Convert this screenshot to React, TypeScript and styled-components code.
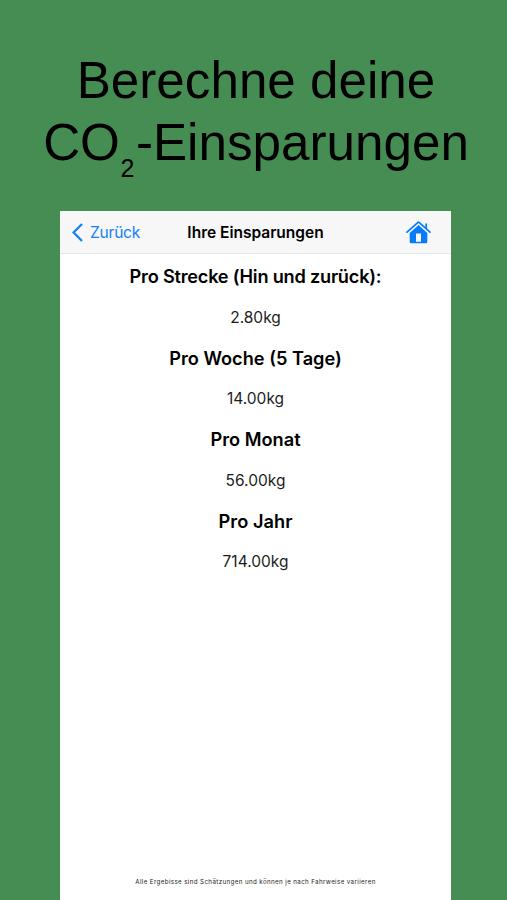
import React from 'react';
import styled, { createGlobalStyle } from 'styled-components';

const GlobalStyle = createGlobalStyle`
  *{box-sizing:border-box}
  body{margin:0;background:#468d53;overflow:hidden}
`;
const Page = styled.main`
  width:507px;height:900px;display:flex;flex-direction:column;background:#468d53;color:#000;overflow:hidden;
`;
const Headline = styled.h1`
  margin:0;height:211px;padding:50px 0 0 5px;font:400 51.2px/62px "Liberation Sans",Arial,sans-serif;text-align:center;white-space:nowrap;
`;
const HeadlineRow = styled.span`
  display:block;
`;
const Subscript = styled.sub`
  display:inline-block;width:16px;text-indent:-1px;text-align:center;font-size:25px;line-height:0;vertical-align:-17px;
`;
const Screen = styled.section`
  width:391px;margin-left:60px;flex:1;display:flex;flex-direction:column;background:#fff;font-family:Inter,sans-serif;
`;
const NavBar = styled.header`
  height:43px;flex:none;display:grid;grid-template-columns:110px 1fr 110px;align-items:center;background:#f7f7f7;border-bottom:1px solid #e6e6e6;
`;
const BackButton = styled.button`
  display:flex;align-items:center;gap:7px;padding:1px 0 0 12px;border:0;background:none;color:#1580f8;font:400 15.6px/20px Inter,sans-serif;letter-spacing:-.25px;
`;
const HomeButton = styled.button`
  justify-self:end;display:flex;margin-right:20px;padding:0;border:0;background:none;color:#087bfa;
`;
const NavTitle = styled.h2`
  margin:0;font-size:15.5px;font-weight:600;text-align:center;white-space:nowrap;
`;
const Results = styled.dl`
  margin:0;padding-top:11.4px;text-align:center;
`;
const Period = styled.dt<{ $tracking: number }>`
  font-size:18.2px;font-weight:630;line-height:22px;height:41.6px;white-space:nowrap;letter-spacing:${p => p.$tracking}px;
`;
const Amount = styled.dd`
  margin:0;color:#1c1c1c;font-size:15.5px;line-height:22px;height:39.9px;
`;
const Footnote = styled.p`
  margin:auto 0 13px;color:#222;font-size:6.2px;line-height:10px;letter-spacing:.385px;text-align:center;white-space:nowrap;
`;

const savings = [
  { period: 'Pro Strecke (Hin und zurück):', amount: '2.80kg', tracking: -0.23 },
  { period: 'Pro Woche (5 Tage)', amount: '14.00kg', tracking: 0 },
  { period: 'Pro Monat', amount: '56.00kg', tracking: 0.02 },
  { period: 'Pro Jahr', amount: '714.00kg', tracking: 0.04 },
];

const BackIcon = () => (
  <svg width="11" height="20" viewBox="0 0 11 20" fill="none" stroke="currentColor" strokeWidth="2.3">
    <path d="M10 1 1.600 9.500 10 18" />
  </svg>
);

const HomeIcon = () => (
  <svg width="25" height="23" viewBox="0 0 25 23">
    <path d="M1 11.200 11.700 1.600Q12.500.9 13.300 1.600L24 11.200M20.200 7.200V3" fill="none" stroke="currentColor" strokeWidth="1.700" strokeLinecap="round" />
    <path fillRule="evenodd" fill="currentColor" d="M12.500 4.100 21.300 12V20.800Q21.300 22.300 19.800 22.300H5.200Q3.700 22.300 3.700 20.800V12ZM10 12.500V20.800H15V12.500Z" />
  </svg>
);

export default function App() {
  return (
    <Page>
      <GlobalStyle />
      <Headline>
        <HeadlineRow>Berechne deine</HeadlineRow>
        <HeadlineRow>CO<Subscript>2</Subscript>-Einsparungen</HeadlineRow>
      </Headline>
      <Screen>
        <NavBar>
          <BackButton><BackIcon />Zurück</BackButton>
          <NavTitle>Ihre Einsparungen</NavTitle>
          <HomeButton aria-label="Home"><HomeIcon /></HomeButton>
        </NavBar>
        <Results>
          {savings.map(({ period, amount, tracking }) => (
            <React.Fragment key={period}>
              <Period $tracking={tracking}>{period}</Period>
              <Amount>{amount}</Amount>
            </React.Fragment>
          ))}
        </Results>
        <Footnote>Alle Ergebisse sind Schätzungen und können je nach Fahrweise variieren</Footnote>
      </Screen>
    </Page>
  );
}
